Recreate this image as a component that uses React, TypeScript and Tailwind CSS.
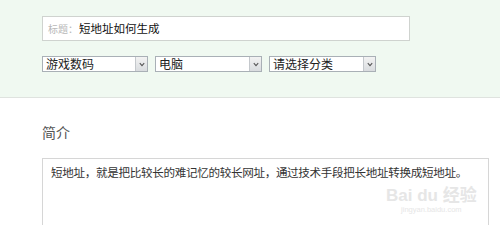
import React from "react";

const font = { fontFamily: '"Noto Sans CJK SC", "Microsoft YaHei", sans-serif' };

function Select({ label, width }: { label: string; width: string }) {
  return (
    <div className={`flex h-[16px] ${width} items-stretch border border-[#a9b0b6] bg-white`}>
      <div className="flex flex-1 items-center pl-[3px] text-[12px] leading-none text-[#222]">{label}</div>
      <div className="flex w-[12px] items-center justify-center border-l border-[#c4c8cc] bg-gradient-to-b from-[#f3f3f3] to-[#d9dcdf]">
        <svg width="6" height="5" viewBox="0 0 6 5">
          <path d="M0.8 1.2 L3 3.6 L5.2 1.2" fill="none" stroke="#555" strokeWidth="1.1" />
        </svg>
      </div>
    </div>
  );
}

export default function App() {
  return (
    <div className="h-[225px] w-[500px] overflow-hidden bg-white" style={font}>
      <div className="flex h-[98px] flex-col border-b border-[#dfe3df] bg-[#f0f9f1] pl-[42px] pt-[16px]">
        <div className="flex h-[25px] w-[368px] items-center border border-[#cfd3cf] bg-white pl-[5px]">
          <span className="text-[10px] text-[#b8b8b8]">标题：</span>
          <span className="ml-[1px] text-[11.5px] text-[#111]">短地址如何生成</span>
        </div>
        <div className="mt-[15px] flex gap-[7px]">
          <Select label="游戏数码" width="w-[106px]" />
          <Select label="电脑" width="w-[107px]" />
          <Select label="请选择分类" width="w-[107px]" />
        </div>
      </div>
      <div className="relative pl-[42px]">
        <div className="pt-[26px] text-[14px] leading-[16px] text-[#555]">简介</div>
        <div className="mt-[18px] h-[80px] w-[447px] whitespace-nowrap border border-[#d6d6d6] bg-white pl-[8px] pt-[5px] text-[11.6px] leading-[16px] tracking-[-0.35px] text-[#333]">
          短地址，就是把比较长的难记忆的较长网址，通过技术手段把长地址转换成短地址。
        </div>
        <div className="absolute left-[386px] top-[87px] flex flex-col items-center text-[#e6e6e6]">
          <span className="text-[17px] font-bold leading-[18px]" style={{ fontFamily: '"Liberation Sans", sans-serif' }}>
            Bai du <span style={font}>经验</span>
          </span>
          <span className="text-[7.5px] leading-[10px]" style={{ fontFamily: '"Liberation Sans", sans-serif' }}>
            jingyan.baidu.com
          </span>
        </div>
      </div>
    </div>
  );
}
